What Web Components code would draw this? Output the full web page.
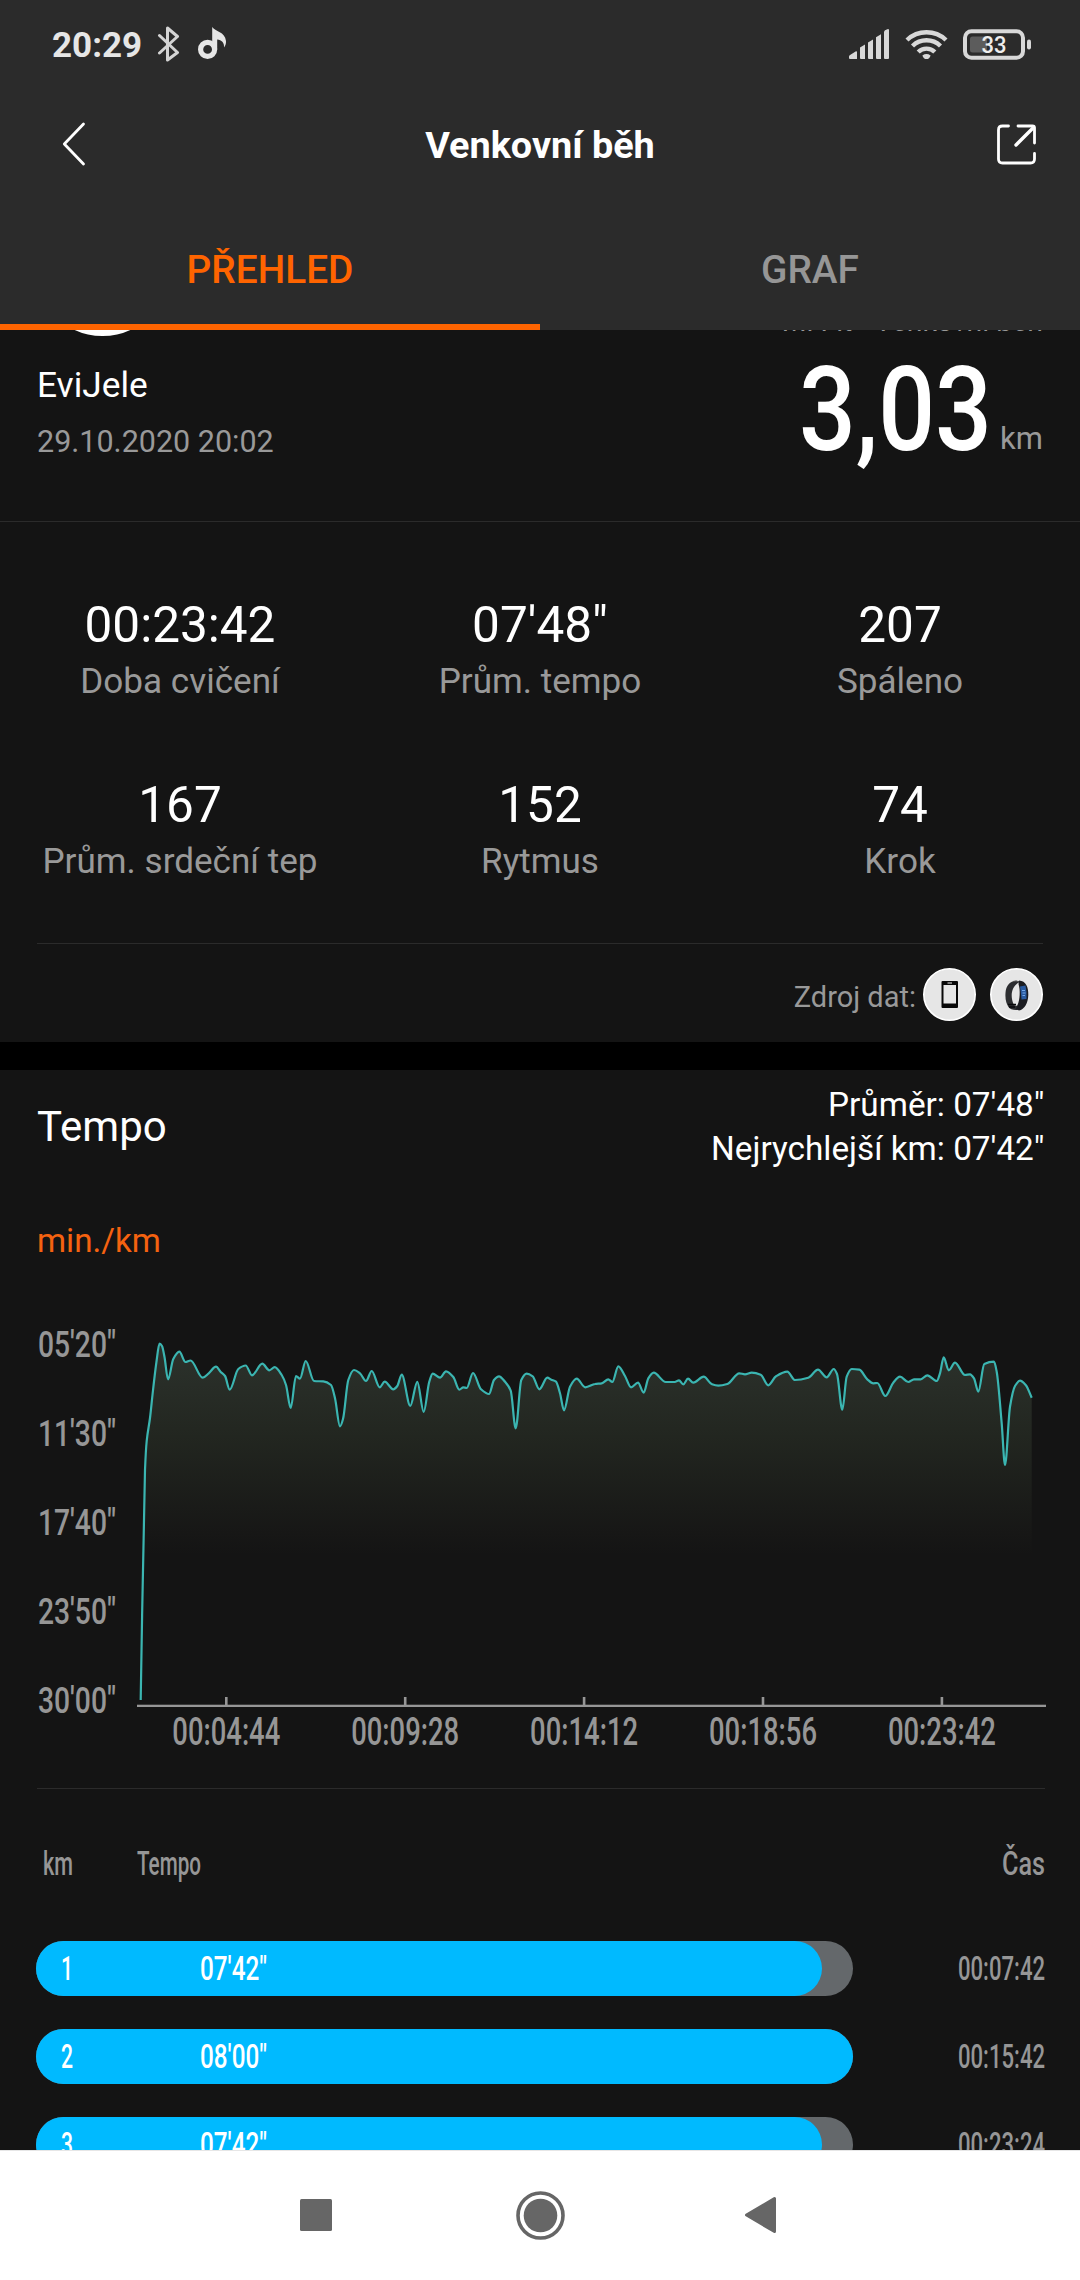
<!DOCTYPE html>
<html lang="cs">
<head>
<meta charset="utf-8">
<title>Venkovní běh</title>
<style>
  body {
    margin: 0;
    width: 1080px;
    height: 2280px;
    overflow: hidden;
    background: #141414;
    color: #fff;
    font-family: Roboto, "Noto Sans", sans-serif;
  }
</style>
</head>
<body>
<workout-app>
  <status-bar slot="header" time="20:29" battery="33"></status-bar>
  <title-bar slot="header">Venkovní běh</title-bar>
  <tab-bar slot="header">
    <tab-item active>PŘEHLED</tab-item>
    <tab-item>GRAF</tab-item>
  </tab-bar>

  <workout-summary name="EviJele" date="29.10.2020 20:02" source="Mi Fit - Venkovní běh" distance="3,03" unit="km"></workout-summary>
  <stat-grid>
    <stat-item label="Doba cvičení">00:23:42</stat-item>
    <stat-item label="Prům. tempo">07'48"</stat-item>
    <stat-item label="Spáleno">207</stat-item>
    <stat-item label="Prům. srdeční tep">167</stat-item>
    <stat-item label="Rytmus">152</stat-item>
    <stat-item label="Krok">74</stat-item>
  </stat-grid>
  <data-source>Zdroj dat:</data-source>
  <pace-header unit="min./km">
    <span slot="title">Tempo</span>
    <div>Průměr: 07'48"</div>
    <div>Nejrychlejší km: 07'42"</div>
  </pace-header>
  <pace-chart></pace-chart>
  <split-table>
    <split-row km="1" pace="07'42&quot;" time="00:07:42" fill="786"></split-row>
    <split-row km="2" pace="08'00&quot;" time="00:15:42" fill="817"></split-row>
    <split-row km="3" pace="07'42&quot;" time="00:23:24" fill="786"></split-row>
  </split-table>

  <nav-bar slot="footer"></nav-bar>
</workout-app>

<script>
// Condensed text: the box is as high as the capitals and as wide as the "width" attribute
class DinText extends HTMLElement {
  constructor() {
    super();
    this.attachShadow({ mode: 'open' });
  }

  connectedCallback() {
    const width = Number(this.getAttribute('width'));
    const cap = Number(this.getAttribute('cap'));
    this.shadowRoot.innerHTML = `
      <style>
        :host { display: block; flex: none; width: ${width}px; height: ${cap}px; }
        span {
          display: block; width: max-content; white-space: nowrap; transform-origin: 0 0;
          font-size: ${cap / 0.711}px; line-height: ${cap}px; font-weight: 500;
        }
      </style>
      <span>${this.getAttribute('text')}</span>
    `;
    // squeeze the natural width into the box and drop the baseline to its bottom edge
    const span = this.shadowRoot.querySelector('span');
    const natural = span.getBoundingClientRect().width;
    span.style.transform = `translateY(${cap * 0.019 + 0.7}px) scaleX(${width / natural})`;
  }
}
customElements.define('din-text', DinText);

class WorkoutApp extends HTMLElement {
  constructor() {
    super();
    this.attachShadow({ mode: 'open' }).innerHTML = `
      <style>
        :host { display: flex; flex-direction: column; height: 2280px; }
        header { height: 330px; flex: none; background: #2b2b2b; }
        main { flex: 1; min-height: 0; overflow: hidden; background: #141414; }
        footer { height: 130px; flex: none; }
      </style>
      <header><slot name="header"></slot></header>
      <main><slot></slot></main>
      <footer><slot name="footer"></slot></footer>
    `;
  }
}
customElements.define('workout-app', WorkoutApp);

class StatusBar extends HTMLElement {
  constructor() {
    super();
    this.attachShadow({ mode: 'open' });
  }

  connectedCallback() {
    this.shadowRoot.innerHTML = `
      <style>
        :host { display: flex; align-items: center; height: 88px; padding: 0 48px 0 52px; box-sizing: border-box; color: #e6e6e6; }
        .time { font-size: 35px; line-height: 40px; font-weight: 700; width: 105px; padding-top: 3px; }
        .note { margin-left: 17px; }
        .signal { margin-left: auto; }
        .wifi { margin-left: 16px; }
        .battery { margin-left: 15px; }
        svg { display: block; }
      </style>
      <span class="time">${this.getAttribute('time')}</span>
      <svg width="24" height="36" viewBox="0 0 24 36" fill="none" stroke="#d4d4d4" stroke-width="3" stroke-linejoin="round" stroke-linecap="round">
        <path d="M2.500 9.500L20.500 26.500L10.500 34V2L20.500 10.500L2.500 27"/>
      </svg>
      <svg class="note" width="30" height="34" viewBox="0 0 30 34">
        <circle cx="9.600" cy="22.400" r="7" fill="none" stroke="#e6e6e6" stroke-width="5.200"/>
        <path d="M14.200 0C17 4.500 27 4.500 28 14C28.200 16.500 27.500 18.500 26 20.500C26.500 15.500 23.500 13 19.200 12.500V22.500H14.200Z" fill="#e6e6e6"/>
      </svg>
      <svg class="signal" width="40" height="30" viewBox="0 0 40 30" fill="#d8d8d8">
        <path d="M0 27.500Q0 26.500 1 26L7 22.200Q8 22 8 23V30H1Q0 30 0 29ZM11 18.500L16 15.600V30H12Q11 30 11 29ZM19 13.500L24 10.600V30H20Q19 30 19 29ZM27 8.200L32 5.200V30H28Q27 30 27 29ZM35 3.200Q35 2 36 1.200L39 0Q40 0 40 1V29Q40 30 39 30H36Q35 30 35 29Z"/>
      </svg>
      <svg class="wifi" width="43" height="32" viewBox="0 0 43 32" fill="none" stroke="#d8d8d8" stroke-width="4.400">
        <path d="M2 12A28.500 28.500 0 0 1 41 12"/>
        <path d="M7.500 18A20 20 0 0 1 35.500 18"/>
        <path d="M13.200 24A11.800 11.800 0 0 1 29.800 24"/>
        <path d="M17.400 27.400Q21.500 24.800 25.600 27.400Q24.500 31 21.500 31Q18.500 31 17.400 27.400Z" fill="#d8d8d8" stroke="none"/>
      </svg>
      <svg class="battery" width="69" height="31" viewBox="0 0 69 31">
        <rect x="2" y="2.300" width="58" height="26.400" rx="6.500" fill="none" stroke="#d8d8d8" stroke-width="4"/>
        <rect x="7" y="7.500" width="17" height="16" rx="2.500" fill="#5c5c5c"/>
        <rect x="64" y="10.500" width="4" height="10" rx="2" fill="#d8d8d8"/>
        <text x="18.500" y="24" font-size="24" font-weight="500" fill="#eee" textLength="25" lengthAdjust="spacingAndGlyphs">${this.getAttribute('battery')}</text>
      </svg>
    `;
  }
}
customElements.define('status-bar', StatusBar);

class TitleBar extends HTMLElement {
  constructor() {
    super();
    this.attachShadow({ mode: 'open' }).innerHTML = `
      <style>
        :host { display: grid; grid-template-columns: 100px 1fr 100px; align-items: center; height: 113px; padding: 0 41px; }
        h1 { margin: 0; text-align: center; font-size: 37.8px; line-height: 48px; font-weight: 700; }
        svg { display: block; fill: none; stroke: #fff; stroke-linecap: round; stroke-linejoin: round; }
        .share { justify-self: end; }
      </style>
      <svg width="46" height="46" viewBox="0 0 46 46" stroke-width="2.800">
        <path d="M42.500 2L23.300 22L42.500 42"/>
      </svg>
      <h1><slot></slot></h1>
      <svg class="share" width="44" height="44" viewBox="0 0 44 44" stroke-width="2.800">
        <path d="M13.500 3H7.500Q3.500 3 3.500 7V36Q3.500 40 7.500 40H35.500Q39.500 40 39.500 36V30.500"/>
        <path d="M23 3H37.500Q39.500 3 39.500 5V20"/>
        <path d="M21 22L38.500 4.500" stroke-width="3.400"/>
      </svg>
    `;
  }
}
customElements.define('title-bar', TitleBar);

class TabBar extends HTMLElement {
  constructor() {
    super();
    this.attachShadow({ mode: 'open' }).innerHTML = `
      <style>
        :host { display: grid; grid-template-columns: 1fr 1fr; height: 129px; }
      </style>
      <slot></slot>
    `;
  }
}
customElements.define('tab-bar', TabBar);

class TabItem extends HTMLElement {
  constructor() {
    super();
    this.attachShadow({ mode: 'open' }).innerHTML = `
      <style>
        :host {
          display: flex; align-items: center; justify-content: center; box-sizing: border-box;
          padding-top: 13px; border-bottom: 6px solid transparent;
          font-size: 38.8px; font-weight: 500; color: #969696;
        }
        :host([active]) { color: #ff6400; border-color: #ff6400; }
      </style>
      <slot></slot>
    `;
  }
}
customElements.define('tab-item', TabItem);

class WorkoutSummary extends HTMLElement {
  constructor() {
    super();
    this.attachShadow({ mode: 'open' });
  }

  connectedCallback() {
    this.shadowRoot.innerHTML = `
      <style>
        :host { display: flex; justify-content: space-between; height: 191px; padding: 0 37px; border-bottom: 1px solid #2b2b2b; }
        .avatar { width: 131px; height: 131px; margin-top: -125px; border: 6px solid #fff; border-radius: 50%; box-sizing: border-box; }
        .name { margin-top: 27px; font-size: 35.3px; line-height: 44px; }
        .date { margin-top: 15px; font-size: 30.5px; line-height: 40px; color: #999; }
        .source { margin-top: -25px; font-size: 28.4px; line-height: 34px; color: #999; }
        .right { display: flex; flex-direction: column; align-items: flex-end; }
        .distance { display: flex; align-items: flex-end; gap: 8px; margin-top: 28px; }
        .unit { margin-bottom: -12px; font-size: 31px; line-height: 46px; color: #999; }
      </style>
      <div>
        <div class="avatar"></div>
        <div class="name">${this.getAttribute('name')}</div>
        <div class="date">${this.getAttribute('date')}</div>
      </div>
      <div class="right">
        <div class="source">${this.getAttribute('source')}</div>
        <div class="distance">
          <din-text text="${this.getAttribute('distance')}" width="193" cap="83"></din-text>
          <span class="unit">${this.getAttribute('unit')}</span>
        </div>
      </div>
    `;
  }
}
customElements.define('workout-summary', WorkoutSummary);

class StatGrid extends HTMLElement {
  constructor() {
    super();
    this.attachShadow({ mode: 'open' }).innerHTML = `
      <style>
        :host { display: grid; grid-template-columns: repeat(3, 1fr); row-gap: 72px; padding: 74px 0 60px; }
      </style>
      <slot></slot>
    `;
  }
}
customElements.define('stat-grid', StatGrid);

class StatItem extends HTMLElement {
  constructor() {
    super();
    this.attachShadow({ mode: 'open' });
  }

  connectedCallback() {
    this.shadowRoot.innerHTML = `
      <style>
        :host { display: block; height: 108px; text-align: center; }
        .value { font-size: 49.5px; line-height: 58px; }
        .label { margin-top: 5px; font-size: 35.1px; line-height: 44px; color: #999; white-space: nowrap; }
      </style>
      <div class="value"><slot></slot></div>
      <div class="label">${this.getAttribute('label')}</div>
    `;
  }
}
customElements.define('stat-item', StatItem);

class DataSource extends HTMLElement {
  constructor() {
    super();
    this.attachShadow({ mode: 'open' }).innerHTML = `
      <style>
        :host { display: block; margin-top: -1px; border-bottom: 28px solid #000; }
        .row {
          display: flex; align-items: center; justify-content: flex-end; box-sizing: border-box;
          height: 99px; margin: 0 37px; padding-top: 3px; border-top: 1px solid #2b2b2b;
        }
        .label { margin-right: 7px; padding-top: 4px; font-size: 29px; line-height: 36px; color: #999; }
        svg { display: block; }
        svg + svg { margin-left: 14px; }
      </style>
      <div class="row">
        <span class="label"><slot></slot></span>
        <svg width="53" height="53" viewBox="0 0 53 53">
          <circle cx="26.500" cy="26.500" r="25.700" fill="#e6e6e6" stroke="#fff" stroke-width="1.600"/>
          <rect x="18.500" y="13" width="16.500" height="27" rx="1" fill="#080808"/>
          <rect x="20.500" y="17" width="12.500" height="18.500" fill="#e6e6e6"/>
          <rect x="24.500" y="14.300" width="4.500" height="1.400" fill="#aaa"/>
        </svg>
        <svg width="53" height="53" viewBox="0 0 53 53">
          <circle cx="26.500" cy="26.500" r="25.700" fill="#e6e6e6" stroke="#fff" stroke-width="1.600"/>
          <path d="M31 13.500C22 10.500 16 16 15.500 25C15 32 16.500 36 18.500 39C20 42 26 42.500 29 41.500L28 37.500C24 38.500 23 36 22 31C20.800 24 23 16.500 31 13.500Z" fill="#2c2d30"/>
          <path d="M29 12.500C36 13 38.500 19 38.300 27C38 35 34.500 41.500 29 42.500L26 41L27.500 37C30 32 30.500 22 28.500 16Z" fill="#1b1c21"/>
          <path d="M29 14Q26 12.300 23 13.500" stroke="#555" fill="none"/>
          <path d="M30 18.500L35.500 17.500Q37 24 36.500 31L31.500 31.500Q31 25 30 18.500Z" fill="#28599f"/>
          <path d="M32 22.500H35M32.500 25H35.500M32.500 27.500H35" stroke="#72a8e8"/>
          <path d="M18 36.500H26M19 39H25" stroke="#08090b" stroke-width="1.500"/>
        </svg>
      </div>
    `;
  }
}
customElements.define('data-source', DataSource);

class PaceHeader extends HTMLElement {
  constructor() {
    super();
    this.attachShadow({ mode: 'open' });
  }

  connectedCallback() {
    this.shadowRoot.innerHTML = `
      <style>
        :host { display: block; padding: 13px 35.5px 0 37px; }
        .top { display: flex; align-items: center; justify-content: space-between; height: 88px; }
        .title { padding-bottom: 2px; font-size: 42px; }
        .records { font-size: 33.3px; line-height: 44px; text-align: right; }
        .unit { margin-top: 50px; font-size: 33.2px; line-height: 40px; color: #f56210; }
      </style>
      <div class="top">
        <div class="title"><slot name="title"></slot></div>
        <div class="records"><slot></slot></div>
      </div>
      <div class="unit">${this.getAttribute('unit')}</div>
    `;
  }
}
customElements.define('pace-header', PaceHeader);

const PACE = [
  [140.7, 1700], [145, 1470], [146.7, 1441], [150, 1418], [152.7, 1393], [156.7, 1360], [159.5, 1343.7],
  [162, 1346], [164.5, 1357], [168, 1379.3], [173.3, 1359], [179.3, 1351.7], [185.5, 1362], [190.5, 1360.5],
  [202.7, 1377.7], [208.7, 1373.3], [216, 1366.7], [220.7, 1372], [225, 1376], [229.7, 1389.6], [238.3, 1369],
  [245.7, 1365.5], [252, 1375.3], [262.3, 1363.7], [269.3, 1370.3], [274.7, 1367.2], [281.7, 1375], [286, 1385],
  [290.7, 1408], [296, 1376], [300, 1378.7], [305.7, 1361], [314, 1381], [323.3, 1381.4], [331, 1385],
  [335, 1398.3], [340, 1426.3], [343, 1419], [348.3, 1380], [354, 1370], [360, 1373.3], [366, 1381], [371.7, 1371],
  [379.7, 1387.3], [384.7, 1381.7], [393.3, 1389.3], [397.3, 1386], [401.7, 1374.5], [410.3, 1405.8],
  [417.3, 1381.8], [423.7, 1411.8], [429.3, 1381.7], [432.7, 1373.7], [440, 1377.7], [446, 1371.3], [453.3, 1377],
  [459.3, 1389.7], [463.3, 1387.3], [466.7, 1388], [473, 1373], [481, 1389.3], [489, 1394], [494, 1380],
  [499, 1376.3], [505, 1381.7], [510.7, 1390.7], [515.7, 1428.3], [521.3, 1380], [526.7, 1373.7], [532.7, 1376.3],
  [539.3, 1389.3], [547.3, 1377.7], [551.3, 1379.7], [556, 1381.7], [560, 1393.3], [564, 1410.3], [570, 1386.7],
  [576.7, 1378.7], [585.3, 1387.3], [595, 1384], [601.7, 1383.3], [608.3, 1379.3], [612.3, 1382], [618.3, 1366.3],
  [625, 1376], [631, 1387.3], [638, 1382.7], [643.7, 1392.7], [648.3, 1378.3], [653.7, 1372.7], [665.7, 1382],
  [674.7, 1382], [679, 1380.3], [683.3, 1384.3], [688, 1378.7], [693.3, 1382.7], [703.7, 1376.7], [712, 1384.3],
  [718.3, 1385.7], [727.3, 1384], [739.3, 1373.3], [745, 1374.3], [751.7, 1372.7], [760.7, 1374.7],
  [768.3, 1385.3], [776, 1376.3], [787.3, 1371.7], [795, 1380], [808.3, 1377.7], [818, 1369.7], [826.7, 1377.3],
  [833.7, 1369], [837, 1374], [842.3, 1409.7], [846.7, 1376.7], [851.7, 1369], [859.3, 1369.7], [867.3, 1379.3],
  [873.3, 1383.3], [877.3, 1383], [885.3, 1396], [893.3, 1382.7], [900, 1376.7], [908.3, 1382], [914, 1379.3],
  [920.7, 1379.3], [927.3, 1375.3], [936.7, 1381], [940, 1373.3], [943.7, 1357.3], [948.7, 1370.3], [955, 1362.7],
  [965, 1375], [970, 1374.3], [974, 1378.3], [978.3, 1391.7], [984.3, 1364], [994, 1361.7], [996.7, 1371.7],
  [1001.7, 1423.3], [1005, 1465], [1010, 1406.7], [1015, 1386], [1020, 1380.7], [1025.7, 1385], [1031.7, 1397.7]
];

// Smooth line through the points, flat at every peak and valley
function smoothPath(points) {
  const slope = (a, b) => (b[1] - a[1]) / (b[0] - a[0]);
  const tangents = points.map((p, i) => {
    if (i === 0) return slope(p, points[1]);
    if (i === points.length - 1) return slope(points[i - 1], p);
    const before = slope(points[i - 1], p);
    const after = slope(p, points[i + 1]);
    return before * after <= 0 ? 0 : 2 * before * after / (before + after);
  });
  let d = `M${points[0][0]} ${points[0][1]}`;
  for (let i = 1; i < points.length; i++) {
    const [x0, y0] = points[i - 1];
    const [x1, y1] = points[i];
    const h = (x1 - x0) / 3;
    d += `C${(x0 + h).toFixed(1)} ${(y0 + tangents[i - 1] * h).toFixed(1)} ${(x1 - h).toFixed(1)} ${(y1 - tangents[i] * h).toFixed(1)} ${x1} ${y1}`;
  }
  return d;
}

class PaceChart extends HTMLElement {
  constructor() {
    super();
    const line = smoothPath(PACE);
    const paces = ['05\'20"', '11\'30"', '17\'40"', '23\'50"', '30\'00"'];
    const times = ['00:04:44', '00:09:28', '00:14:12', '00:18:56', '00:23:42'];
    const yLabels = paces.map((t, i) => `<text x="38" y="${1356.5 + i * 89.2}" font-size="36.5" textLength="78" lengthAdjust="spacingAndGlyphs">${t}</text>`).join('');
    const xLabels = times.map((t, i) => {
      const x = 226.3 + i * 178.9;
      return `<rect x="${x - 1.3}" y="1697" width="2.6" height="8"/>
        <text x="${x - 54}" y="1745" font-size="38" textLength="108" lengthAdjust="spacingAndGlyphs">${t}</text>`;
    }).join('');
    this.attachShadow({ mode: 'open' }).innerHTML = `
      <style>
        :host { display: block; height: 528px; margin-top: -1px; }
        svg { display: block; fill: #969696; }
        text { font-weight: 500; }
      </style>
      <svg width="1080" height="528" viewBox="0 1260 1080 528">
        <defs>
          <linearGradient id="area" gradientUnits="userSpaceOnUse" x1="0" y1="1340" x2="0" y2="1555">
            <stop offset="0" stop-color="#2d332d"/>
            <stop offset="0.45" stop-color="#222620"/>
            <stop offset="0.9" stop-color="#171716"/>
            <stop offset="1" stop-color="#141414"/>
          </linearGradient>
        </defs>
        <path d="${line}V1555H143.500Z" fill="url(#area)"/>
        <path d="${line}" fill="none" stroke="#3bb5b1" stroke-width="2.200"/>
        <rect x="137" y="1704.700" width="909" height="2.300"/>
        ${yLabels}
        ${xLabels}
      </svg>
    `;
  }
}
customElements.define('pace-chart', PaceChart);

class SplitTable extends HTMLElement {
  constructor() {
    super();
    this.attachShadow({ mode: 'open' }).innerHTML = `
      <style>
        :host { display: block; }
        .head { display: flex; margin: 0 35px 66px 37px; padding: 63px 0 0 6px; border-top: 1px solid #2b2b2b; color: #969696; }
        .pace { margin-left: 64px; }
        .time { margin-left: auto; }
        .rows { display: grid; row-gap: 33px; }
      </style>
      <div class="head">
        <din-text text="km" width="30" cap="23"></din-text>
        <din-text class="pace" text="Tempo" width="64" cap="23"></din-text>
        <din-text class="time" text="Čas" width="43" cap="23"></din-text>
      </div>
      <div class="rows"><slot></slot></div>
    `;
  }
}
customElements.define('split-table', SplitTable);

class SplitRow extends HTMLElement {
  constructor() {
    super();
    this.attachShadow({ mode: 'open' });
  }

  connectedCallback() {
    this.shadowRoot.innerHTML = `
      <style>
        :host { display: flex; align-items: center; justify-content: space-between; height: 55px; padding: 0 35px 0 36px; color: #969696; }
        .track { width: 817px; height: 55px; border-radius: 27.5px; background: #64686b; }
        .bar {
          display: grid; grid-template-columns: 139px auto; align-items: center; justify-content: start; box-sizing: border-box;
          width: ${this.getAttribute('fill')}px; height: 55px; padding-left: 25px;
          border-radius: 27.5px; background: #00baff; color: #fff;
        }
      </style>
      <div class="track">
        <div class="bar">
          <din-text text="${this.getAttribute('km')}" width="12" cap="23"></din-text>
          <din-text text="${this.getAttribute('pace').replace('"', '&quot;')}" width="67" cap="23"></din-text>
        </div>
      </div>
      <din-text text="${this.getAttribute('time')}" width="87" cap="23"></din-text>
    `;
  }
}
customElements.define('split-row', SplitRow);

class NavBar extends HTMLElement {
  constructor() {
    super();
    this.attachShadow({ mode: 'open' }).innerHTML = `
      <style>
        :host { display: flex; align-items: center; height: 130px; padding: 0 0 1px 300px; box-sizing: border-box; background: #fff; border-top: 1px solid #e6e6e6; }
        svg { display: block; fill: #666; }
        .home { margin-left: 184px; }
        .back { margin-left: 179px; }
      </style>
      <svg width="32" height="32"><rect width="32" height="32" rx="1.500"/></svg>
      <svg class="home" width="49" height="49" viewBox="0 0 49 49">
        <circle cx="24.500" cy="24.500" r="22.500" fill="none" stroke="#666" stroke-width="3.600"/>
        <circle cx="24.500" cy="24.500" r="16.800"/>
      </svg>
      <svg class="back" width="33" height="38" viewBox="0 0 33 38">
        <path d="M2.500 19L30.500 2.500V35.500Z" stroke="#666" stroke-width="3" stroke-linejoin="round"/>
      </svg>
    `;
  }
}
customElements.define('nav-bar', NavBar);
</script>
</body>
</html>
